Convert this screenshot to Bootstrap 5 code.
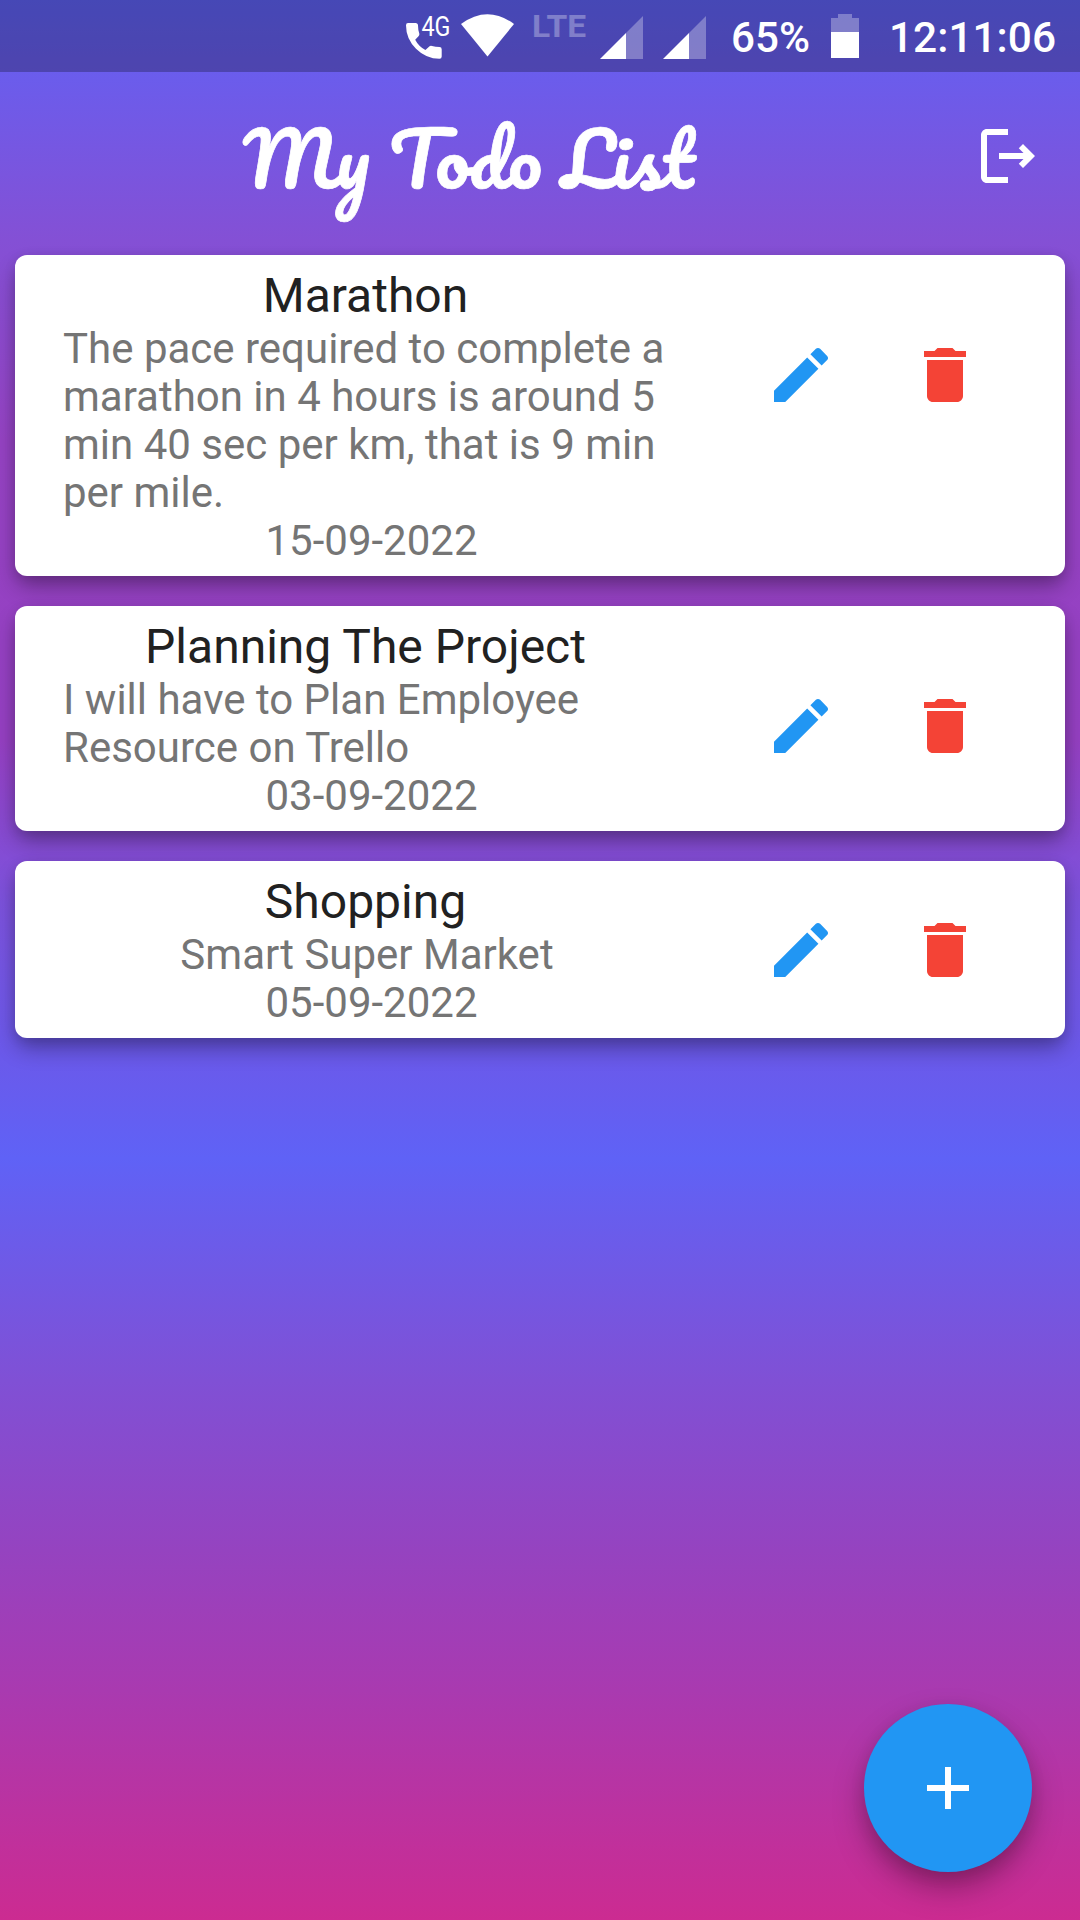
<!DOCTYPE html>
<html lang="en">
<head>
<meta charset="utf-8">
<meta name="viewport" content="width=device-width, initial-scale=1">
<title>My Todo List</title>
<link href="https://cdn.jsdelivr.net/npm/bootstrap@5.3.0/dist/css/bootstrap.min.css" rel="stylesheet">
<script src="https://cdn.jsdelivr.net/npm/bootstrap@5.3.0/dist/js/bootstrap.bundle.min.js" defer></script>
<style>
body{font-family:Roboto,"Liberation Sans",sans-serif;}
.screen{width:1080px;height:1920px;background:linear-gradient(180deg,#5f62f6 0,#8450d5 240px,#9543c3 440px,#9540c2 740px,#7c52dc 902px,#6b59ea 1050px,#5f62f6 1158px,#8050d5 1381px,#9543c0 1550px,#a93ab0 1690px,#cc2b91 1920px);}
.statusbar{height:72px;background:rgba(0,0,0,.26);padding-right:18px;}
.status-icons{width:480px;height:72px;}
.clock{width:192px;height:72px;}
.app-header{height:168px;}
.app-title{width:480px;height:140px;margin-left:230px;margin-bottom:-4px;}
.app-title text{font-family:Pacifico,cursive,Lato,sans-serif;font-size:72px;fill:#fff;stroke:#fff;stroke-width:.7px;}
.logout{width:72px;height:72px;margin-right:36px;}
.todo-list{padding:15px 15px 0;gap:30px;}
.todo{border:0;border-radius:12px;background:#fff;padding:14px 0 11px 47px;box-shadow:0 12px 22px -2px rgba(0,0,0,.32),0 3px 12px rgba(0,0,0,.1);}
.todo-text{width:606px;}
.todo-title{font-size:48px;line-height:54px;margin-bottom:2px;padding-left:1px;color:#212121;}
.todo-note{font-size:42px;line-height:48px;padding-left:1px;color:#757575;}
.todo-note.due{padding-left:13px;}
.todo-actions{margin-left:97px;padding-top:70px;gap:72px;}
.todo-actions.compact{padding-top:39px;}
.todo-actions svg{width:72px;height:72px;display:block;}
.edit{fill:#2196f3;}
.remove{fill:#f44336;}
.fab,.fab:hover{width:168px;height:168px;right:48px;bottom:48px;background:#2196f3;box-shadow:0 16px 32px -2px rgba(0,0,0,.34),0 4px 16px rgba(0,0,0,.08);}
</style>
</head>
<body>
<svg class="d-none">
  <symbol id="i-edit" viewBox="0 0 24 24"><path d="M3 17.250V21h3.750L17.810 9.940l-3.750-3.750L3 17.250ZM20.710 7.040c.39-.39.39-1.020 0-1.410l-2.340-2.340c-.39-.39-1.020-.39-1.410 0l-1.830 1.830 3.750 3.750 1.830-1.830Z"/></symbol>
  <symbol id="i-delete" viewBox="0 0 24 24"><path d="M6 19c0 1.100.9 2 2 2h8c1.100 0 2-.9 2-2V7H6v12ZM19 4h-3.500l-1-1h-5l-1 1H5v2h14V4Z"/></symbol>
</svg>
<main class="screen d-flex flex-column position-relative overflow-hidden">
  <div class="statusbar d-flex justify-content-end">
    <svg class="status-icons flex-shrink-0" viewBox="390 0 480 72" fill="#fff">
      <path d="M408 23h7.500q2.500 0 2.500 2.500 0 4 1.300 8 .4 1.600-.8 2.800l-3.300 3.400q3.500 6.800 10.200 10.200l3.600-3.200q1.300-1.200 3-.7 3.500 1 7.500 1 2.200 0 2.200 2.200v7.300q0 2.200-2.200 2.200-13.500 0-23.500-10T406 25.200q0-2.200 2-2.200Z"/>
      <text x="421.500" y="36" font-size="27" textLength="29" lengthAdjust="spacingAndGlyphs">4G</text>
      <path d="M461 24Q487.500 4.500 514 24L487.500 56.500Z"/>
      <text x="532" y="37" font-size="32" font-weight="700" opacity=".3" textLength="54" lengthAdjust="spacingAndGlyphs">LTE</text>
      <path opacity=".3" d="M626 33 643 16V59H626Z"/><path d="M600 59 626 33V59Z"/>
      <path opacity=".3" d="M689 33 706 16V59H689Z"/><path d="M663 59 689 33V59Z"/>
      <text x="731" y="52" font-size="42" font-weight="500" textLength="79" lengthAdjust="spacingAndGlyphs">65%</text>
      <path opacity=".3" d="M831 18h7v-4h14v4h7v14h-28Z"/><path d="M831 32h28v26h-28Z"/>
    </svg>
    <svg class="clock flex-shrink-0" viewBox="870 0 192 72" fill="#fff"><text x="889" y="52" font-size="42" font-weight="500" textLength="167" lengthAdjust="spacingAndGlyphs">12:11:06</text></svg>
  </div>
  <header class="app-header d-flex align-items-center justify-content-between">
    <svg class="app-title" viewBox="230 88 480 140" role="heading" aria-label="My Todo List"><text x="243" y="189" textLength="451" lengthAdjust="spacingAndGlyphs">My Todo List</text></svg>
    <svg class="logout" viewBox="0 0 24 24" fill="#fff"><path d="m17 8-1.410 1.410L17.170 11H9v2h8.170l-1.580 1.580L17 16l4-4-4-4ZM5 5h7V3H5c-1.100 0-2 .9-2 2v14c0 1.100.9 2 2 2h7v-2H5V5Z"/></svg>
  </header>
  <section class="todo-list d-flex flex-column">
    <article class="card todo flex-row align-items-start">
      <div class="todo-text d-flex flex-column">
        <div class="todo-title text-center">Marathon</div>
        <div class="todo-note">The pace required to complete a<br>marathon in 4 hours is around 5<br>min 40 sec per km, that is 9 min<br>per mile.</div>
        <div class="todo-note due text-center">15-09-2022</div>
      </div>
      <div class="todo-actions d-flex"><svg class="edit"><use href="#i-edit"/></svg><svg class="remove"><use href="#i-delete"/></svg></div>
    </article>
    <article class="card todo flex-row align-items-start">
      <div class="todo-text d-flex flex-column">
        <div class="todo-title text-center">Planning The Project</div>
        <div class="todo-note">I will have to Plan Employee<br>Resource on Trello</div>
        <div class="todo-note due text-center">03-09-2022</div>
      </div>
      <div class="todo-actions d-flex"><svg class="edit"><use href="#i-edit"/></svg><svg class="remove"><use href="#i-delete"/></svg></div>
    </article>
    <article class="card todo flex-row align-items-start">
      <div class="todo-text d-flex flex-column">
        <div class="todo-title text-center">Shopping</div>
        <div class="todo-note text-center ps-1">Smart Super Market</div>
        <div class="todo-note due text-center">05-09-2022</div>
      </div>
      <div class="todo-actions compact d-flex"><svg class="edit"><use href="#i-edit"/></svg><svg class="remove"><use href="#i-delete"/></svg></div>
    </article>
  </section>
  <button class="fab btn rounded-circle border-0 p-0 position-absolute d-flex align-items-center justify-content-center" aria-label="Add"><svg width="72" height="72" viewBox="0 0 24 24" fill="#fff"><path d="M19 13h-6v6h-2v-6H5v-2h6V5h2v6h6v2Z"/></svg></button>
</main>
</body>
</html>
